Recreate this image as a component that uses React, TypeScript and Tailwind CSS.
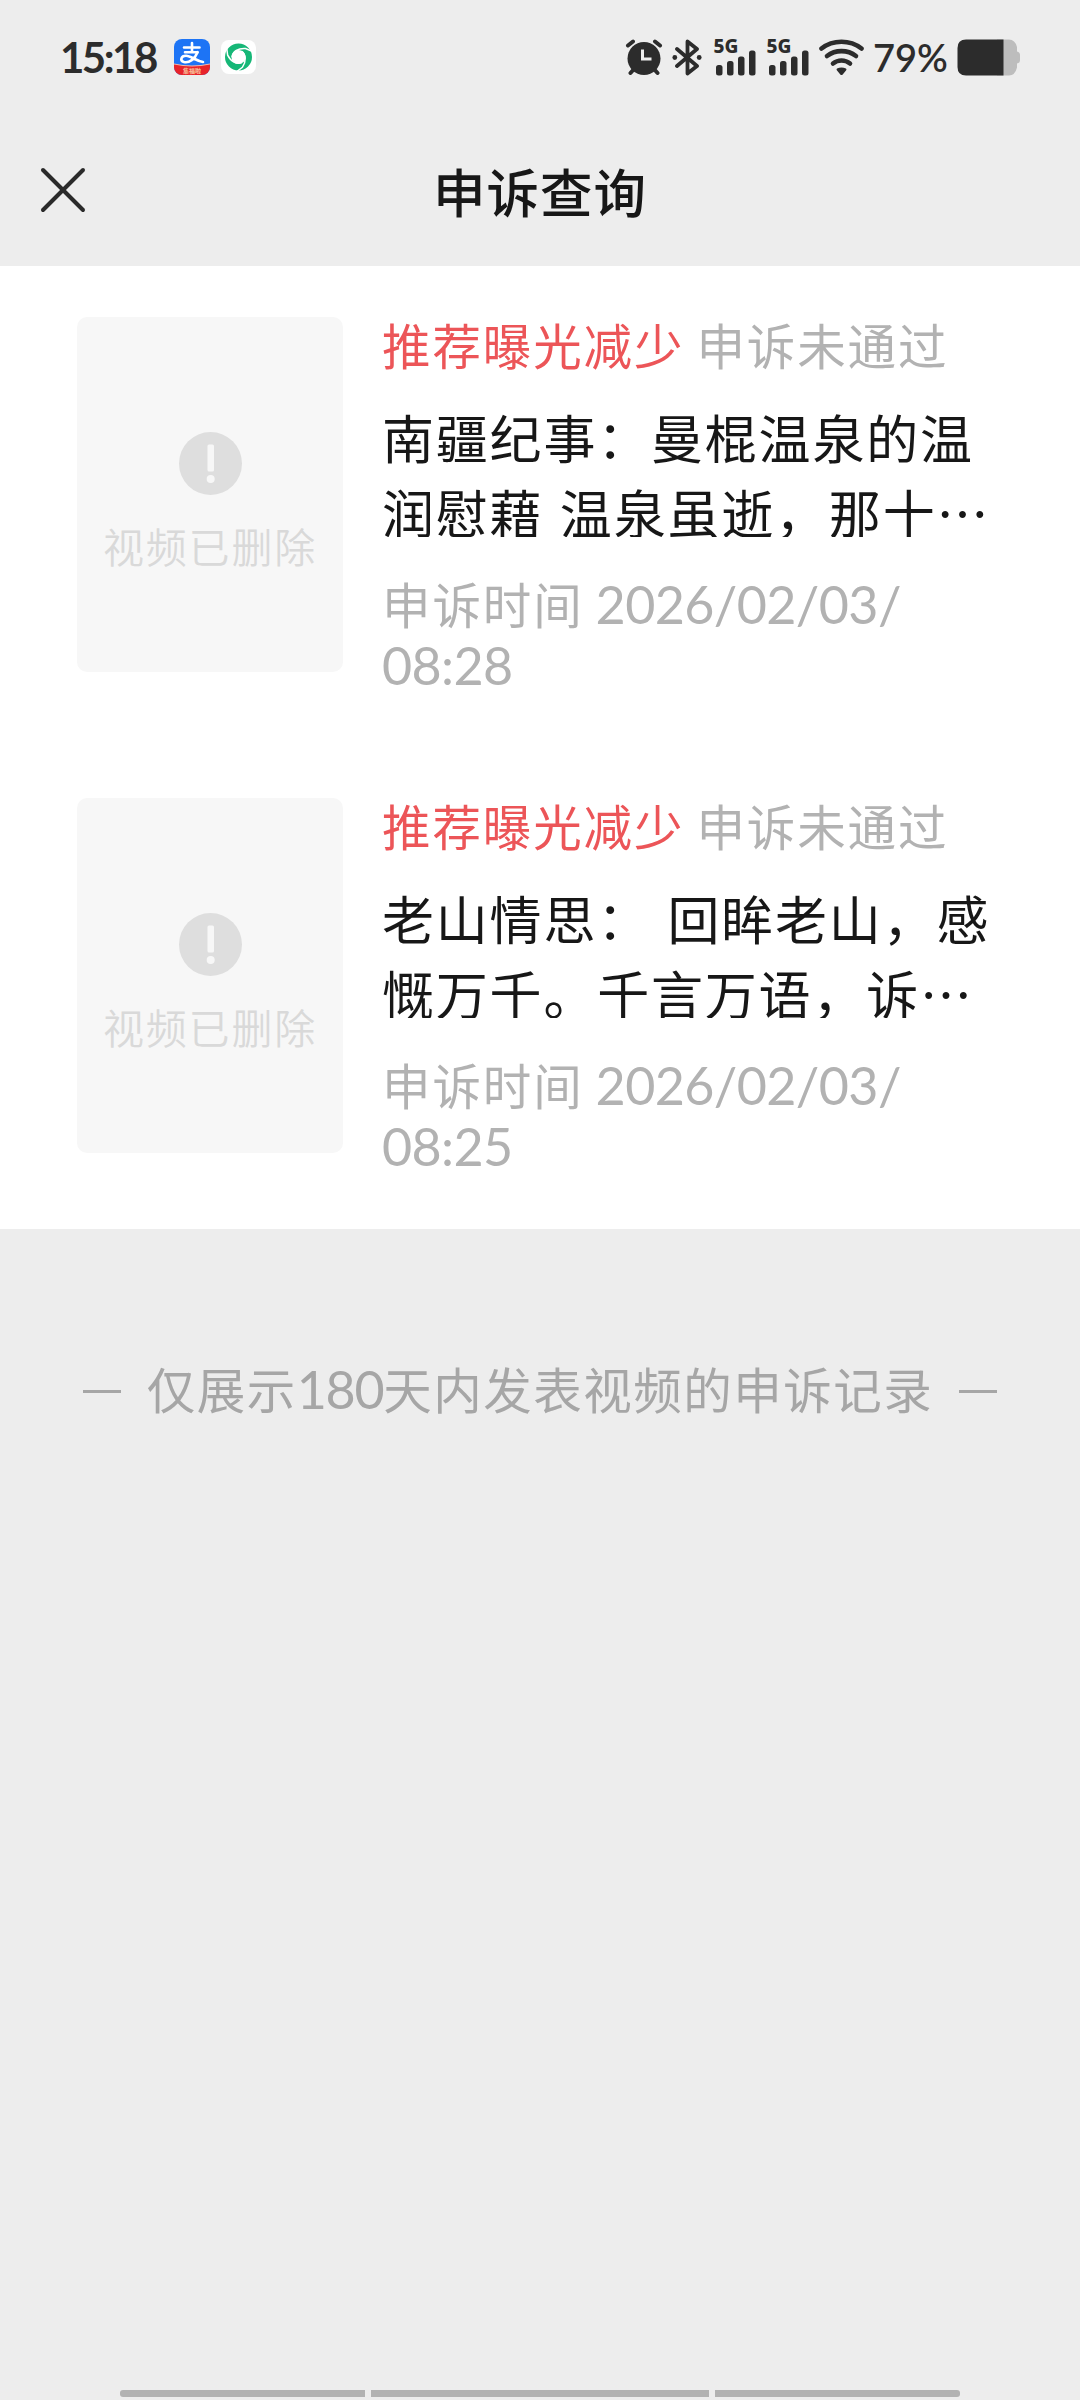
import { X } from "lucide-react";

type Appeal = {
  id: number;
  reason: string;
  result: string;
  lines: string[];
  date: string;
  time: string;
};

const appeals: Appeal[] = [
  {
    id: 1,
    reason: "推荐曝光减少",
    result: "申诉未通过",
    lines: ["南疆纪事：曼棍温泉的温", "润慰藉 温泉虽逝，那十…"],
    date: "2026/02/03/",
    time: "08:28",
  },
  {
    id: 2,
    reason: "推荐曝光减少",
    result: "申诉未通过",
    lines: ["老山情思： 回眸老山，感", "慨万千。千言万语，诉…"],
    date: "2026/02/03/",
    time: "08:25",
  },
];

function AlipayIcon() {
  return (
    <svg width="36" height="36" viewBox="0 0 36 36">
      <defs>
        <clipPath id="alipay">
          <rect width="36" height="36" rx="8" />
        </clipPath>
      </defs>
      <g clipPath="url(#alipay)">
        <rect width="36" height="36" fill="#1d74f5" />
        <path d="M0 25Q18 29 36 25V36H0Z" fill="#e8232a" />
        <path d="M0 25Q18 29 36 25" stroke="#f6b9a8" strokeWidth="1" fill="none" />
        <g stroke="#fff" fill="none" strokeLinecap="round" strokeWidth="2.6">
          <path d="M10 8.5H25.5M18 4V13M11 13.2H23.5" />
          <path d="M23.5 13.2C21 20 15 24.2 10 23C5.500 21.500 7 16.800 12 16.800C17 16.800 22 22 29 23" />
        </g>
        <text x="18" y="33.500" textAnchor="middle" fontSize="6" fontWeight="700" fill="#f9c9a0" className="font-['Noto_Sans_CJK_SC',sans-serif]">
          集福啦
        </text>
      </g>
    </svg>
  );
}

function SwirlIcon() {
  return (
    <svg width="35" height="34" viewBox="0 0 35 34">
      <rect width="35" height="34" rx="8" fill="#fff" />
      <circle cx="17.500" cy="17" r="10.300" stroke="#16b777" strokeWidth="6.400" fill="none" />
      {[0, 120, 240].map((a) => (
        <path key={a} d="M11 17C12 11.500 17 8 24.500 8.500L30.500 11" stroke="#fff" strokeWidth="1.500" fill="none" transform={`rotate(${a} 17.500 17)`} />
      ))}
    </svg>
  );
}

function AlarmIcon() {
  return (
    <svg width="38" height="37" viewBox="0 0 38 37">
      <g stroke="#2c2c2c" strokeWidth="4" strokeLinecap="round">
        <path d="M3 6.500L8 2.500M35 6.500L30 2.500M5.500 34L9 30M32.500 34L29 30" />
      </g>
      <circle cx="19" cy="19.500" r="16.500" fill="#2c2c2c" />
      <path d="M17.500 10.500V20H26.500" stroke="#eee" strokeWidth="3" fill="none" />
    </svg>
  );
}

function BluetoothIcon() {
  return (
    <svg width="30" height="37" viewBox="0 0 30 37">
      <path d="M5 10L25 27L15.500 34.500V2.500L25 10L5 27" stroke="#2c2c2c" strokeWidth="3.800" strokeLinecap="round" strokeLinejoin="round" fill="none" />
      <circle cx="2.800" cy="18.500" r="2.400" fill="#2c2c2c" />
      <circle cx="27.200" cy="18.500" r="2.400" fill="#2c2c2c" />
    </svg>
  );
}

function SignalIcon() {
  return (
    <svg width="42" height="37" viewBox="0 0 42 37" className="overflow-visible">
      <text x="-0.500" y="14" fontSize="19" fontWeight="800" fill="#2c2c2c" className="font-['Noto_Sans',sans-serif]">
        5G
      </text>
      <g fill="#2c2c2c">
        <rect x="2" y="26" width="6.500" height="10.500" rx="2.500" />
        <rect x="13" y="22" width="6.500" height="14.500" rx="2.500" />
        <rect x="24" y="17.500" width="6.500" height="19" rx="2.500" />
        <rect x="35" y="11.500" width="6.500" height="25" rx="2.500" />
      </g>
    </svg>
  );
}

function WifiIcon() {
  return (
    <svg width="45" height="37" viewBox="0 0 45 37">
      <g stroke="#2c2c2c" strokeWidth="4.600" strokeLinecap="round" fill="none">
        <path d="M2.500 9.500C14 0.500 31 0.500 42.500 9.500" />
        <path d="M8 17C16.500 10.500 28.500 10.500 37 17" />
        <path d="M14 24.500C19 20.500 26 20.500 31 24.500" />
      </g>
      <path d="M18 29.500Q22.500 27.500 27 29.500Q28 30.500 27 31.500L23.700 35.500Q22.500 36.700 21.300 35.500L18 31.500Q17 30.500 18 29.500Z" fill="#2c2c2c" />
    </svg>
  );
}

function BatteryIcon() {
  return (
    <svg width="63" height="37" viewBox="0 0 63 37">
      <path d="M40 0.500H52Q58 0.500 60 8V12.500Q63 13 63 16V21Q63 24 60 24.500V28.500Q58 36.500 52 36.500H40Z" fill="#bdbdbd" />
      <path d="M9 0.500H46.500V36.500H9Q0.500 36.500 0.500 28V9Q0.500 0.500 9 0.500Z" fill="#2c2c2c" />
    </svg>
  );
}

function StatusBar() {
  return (
    <div className="flex h-[114px] items-center justify-between px-[60px] text-[#2c2c2c]">
      <div className="flex items-center">
        <span className="w-[114px] font-['Lato',sans-serif] text-[42px] leading-none font-bold tracking-[-2.500px] whitespace-nowrap">15:18</span>
        <AlipayIcon />
        <span className="ml-[11px]">
          <SwirlIcon />
        </span>
      </div>
      <div className="flex items-center">
        <AlarmIcon />
        <span className="ml-[9px]"><BluetoothIcon /></span>
        <span className="ml-[12px]"><SignalIcon /></span>
        <span className="ml-[11px]"><SignalIcon /></span>
        <span className="ml-[10px]"><WifiIcon /></span>
        <span className="ml-[9px] w-[84px] font-['Lato',sans-serif] text-[38px] leading-none font-semibold whitespace-nowrap">79%</span>
        <BatteryIcon />
      </div>
    </div>
  );
}

function DeletedThumb() {
  return (
    <div className="flex h-[355px] w-[266px] shrink-0 flex-col items-center rounded-[10px] bg-[#f7f7f7] pt-[115px]">
      <svg width="63" height="63" viewBox="0 0 63 63">
        <circle cx="31.500" cy="31.500" r="31.500" fill="#dedede" />
        <rect x="28.500" y="12.500" width="6.500" height="27" rx="1.500" fill="#f7f7f7" />
        <circle cx="31.700" cy="47" r="4" fill="#f7f7f7" />
      </svg>
      <span className="mt-[19px] text-[41px] leading-[62px] font-[350] tracking-[1.800px] whitespace-nowrap text-[#d9d9d9]">视频已删除</span>
    </div>
  );
}

function AppealCard({ appeal }: { appeal: Appeal }) {
  return (
    <div className="flex h-[481px] pt-[51px] pl-[77px]">
      <DeletedThumb />
      <div className="-mt-[3px] ml-[39px] flex-1">
        <div className="flex h-[60px] items-center text-[48.500px] leading-[60px] tracking-[1.900px] whitespace-nowrap">
          <span className="text-[#ec5558]">{appeal.reason}</span>
          <span className="ml-[12px] text-[#b2b2b2]">{appeal.result}</span>
        </div>
        <div className="mt-[25px] h-[138px] overflow-hidden text-[52px] leading-[75px] tracking-[1.800px] whitespace-nowrap text-[#171717] [word-spacing:3px]">
          {appeal.lines.map((line) => (
            <p key={line}>{line}</p>
          ))}
        </div>
        <div className="mt-[36px] text-[48.500px] leading-[61px] tracking-[1.900px] whitespace-nowrap text-[#b2b2b2]">
          <p>
            申诉时间
            <span className="ml-[12px] font-['Lato',sans-serif] text-[52px] tracking-[-0.600px]">{appeal.date}</span>
          </p>
          <p className="font-['Lato',sans-serif] text-[52px] tracking-[-0.600px]">{appeal.time}</p>
        </div>
      </div>
    </div>
  );
}

export default function App() {
  return (
    <div lang="zh-CN" className="flex h-[2400px] w-[1080px] flex-col overflow-hidden bg-[#ededed] font-['Noto_Sans_CJK_SC',sans-serif]">
      <StatusBar />
      <header className="grid h-[152px] grid-cols-[1fr_auto_1fr] items-center px-[23px]">
        <button aria-label="关闭" className="w-[80px]">
          <X size={80} strokeWidth={1.2} color="#2a2a2a" />
        </button>
        <h1 className="text-[52.500px] leading-[76px] font-medium tracking-[1px] text-[#171717]">申诉查询</h1>
      </header>

      <main className="h-[963px] bg-white">
        {appeals.map((a) => (
          <AppealCard key={a.id} appeal={a} />
        ))}
      </main>

      <div className="mt-[126px] flex h-[72px] items-center justify-between px-[83px] text-[#a6a6a6]">
        <span className="h-[3px] w-[38px] bg-[#a6a6a6]" />
        <p className="-mt-[4px] text-[48.500px] tracking-[1.500px] whitespace-nowrap">
          仅展示<span className="font-['Lato',sans-serif] text-[52px] tracking-[-1.300px]">180</span>天内发表视频的申诉记录
        </p>
        <span className="h-[3px] w-[38px] bg-[#a6a6a6]" />
      </div>

      <div className="mt-auto mb-[3px] flex justify-center gap-[6px]">
        <span className="h-[7px] w-[245px] rounded-l-[3px] bg-[#b2b2b2]" />
        <span className="h-[7px] w-[338px] bg-[#b2b2b2]" />
        <span className="h-[7px] w-[245px] rounded-r-[3px] bg-[#b2b2b2]" />
      </div>
    </div>
  );
}
